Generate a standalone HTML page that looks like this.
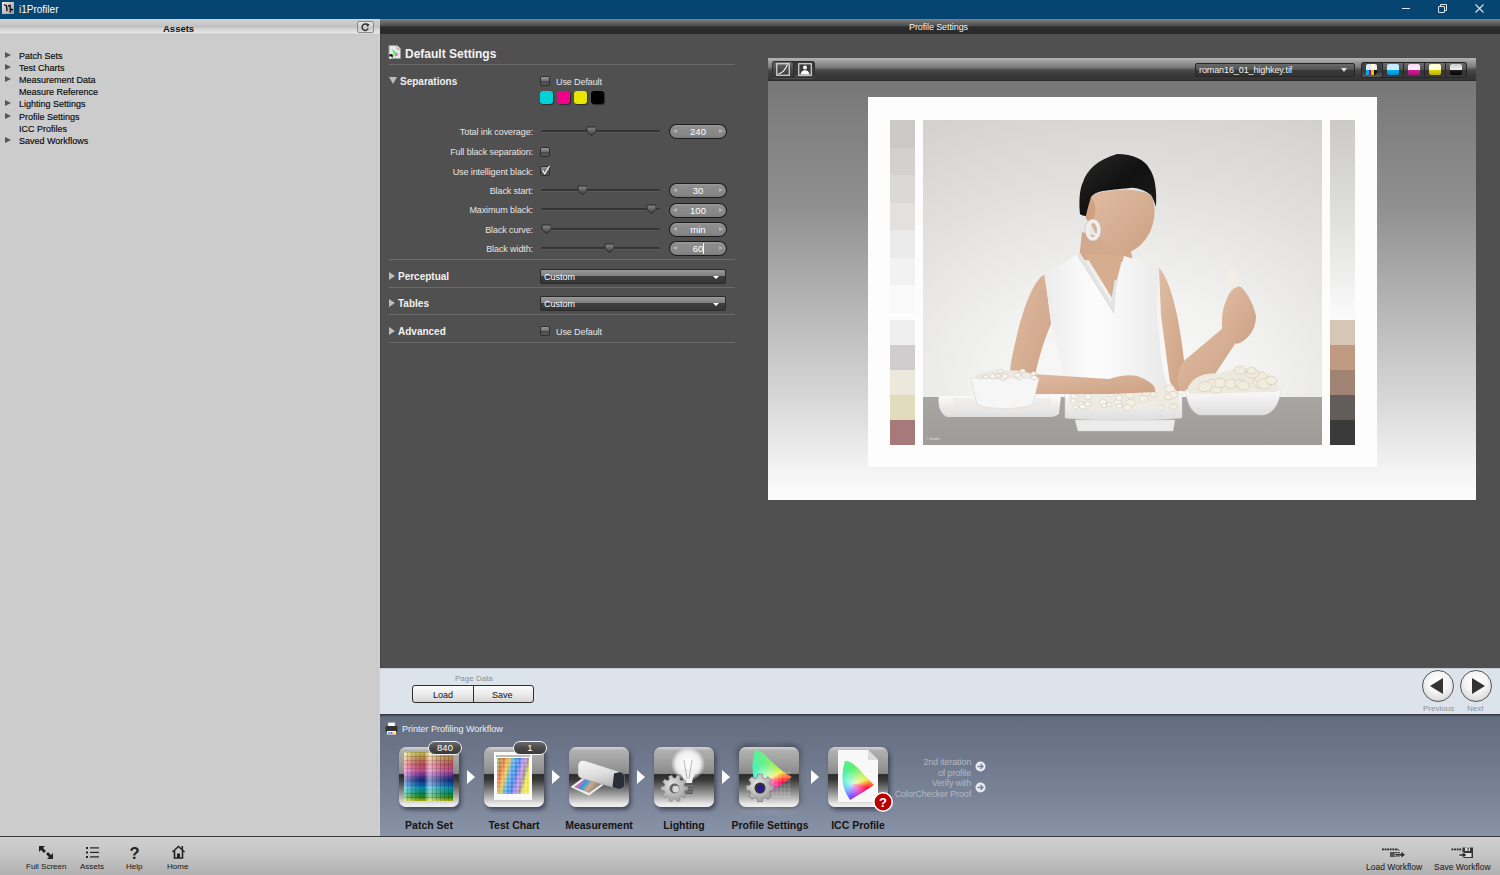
<!DOCTYPE html>
<html><head><meta charset="utf-8">
<style>
*{margin:0;padding:0;box-sizing:border-box}
html,body{width:1500px;height:875px;overflow:hidden;background:#505050;font-family:"Liberation Sans",sans-serif;}
.a{position:absolute}
.t{position:absolute;white-space:nowrap;line-height:1}
#title{left:0;top:0;width:1500px;height:19px;background:#064571;z-index:5}
#lp{left:0;top:18px;width:380px;height:818px;background:#cccccc}
#lph{left:0;top:18px;width:380px;height:17px;background:linear-gradient(#d4d4d4 0,#c9c9c9 35%,#c0c0c0 50%,#d2d2d2 62%,#e6e6e6 88%,#bdbdbd 100%)}
#ch{left:380px;top:18px;width:1120px;height:16px;background:linear-gradient(#8a8a8a 0,#707070 20%,#4a4a4a 50%,#2c2c2c 55%,#2a2a2a 100%)}
#main{left:380px;top:34px;width:1120px;height:634px;background:#505050}
.tri-r{position:absolute;width:0;height:0;border-top:3.75px solid transparent;border-bottom:3.75px solid transparent;border-left:6.5px solid #555}
.tree{font-size:9px;color:#0a0a0a;-webkit-text-stroke:0.15px #0a0a0a}
.lbl{font-size:9px;color:#e6e6e6;text-align:right;letter-spacing:-0.1px}
.cb{position:absolute;width:10px;height:10px;border:1px solid #2e2e2e;border-radius:2px;background:linear-gradient(#9a9a9a,#6a6a6a 50%,#4a4a4a 55%,#5a5a5a)}
.sep{position:absolute;left:389px;width:346px;height:1px;background:#6b6b6b}
.track{position:absolute;left:541px;width:119px;height:3px;border-radius:2px;background:linear-gradient(#2e2e2e,#3a3a3a 60%,#707070)}
.thumb{position:absolute;width:10px;height:10px}
.spin{position:absolute;left:669px;width:58px;height:15px;border-radius:8px;background:#1c1c1c;}
.spin i{position:absolute;left:1px;top:1.3px;right:1px;bottom:0.6px;border-radius:7px;background:linear-gradient(#9a9a9a,#8c8c8c 20%,#868686 80%,#7a7a7a)}
.spin b{position:absolute;left:0;right:0;top:2.5px;font-weight:400;font-size:9.5px;color:#fff;text-align:center;line-height:1}
.spin u{position:absolute;left:4px;top:5px;width:0;height:0;border-top:2.6px solid transparent;border-bottom:2.6px solid transparent;border-right:4.5px solid #b4b4b4}
.spin em{position:absolute;right:4px;top:5px;width:0;height:0;border-top:2.6px solid transparent;border-bottom:2.6px solid transparent;border-left:4.5px solid #b4b4b4}
.sw{position:absolute;top:91px;width:13px;height:13px;border-radius:3px;box-shadow:1px 1px 1px rgba(0,0,0,.45)}
.sec{font-size:10px;font-weight:700;color:#f0f0f0}
.dd{position:absolute;left:540px;width:186px;height:15px;border:1px solid #2a2a2a;border-radius:2px;background:linear-gradient(#9a9a9a,#7e7e7e 45%,#3e3e3e 50%,#363636)}
.dd b{position:absolute;left:3px;top:1.5px;font-weight:400;font-size:9px;color:#fff}
.dd s{position:absolute;right:6px;top:5.5px;width:0;height:0;border-left:3.5px solid transparent;border-right:3.5px solid transparent;border-top:3.5px solid #fff}

.wi{position:absolute;top:747px;width:60px;height:60px;border-radius:7px;overflow:hidden;background:linear-gradient(#d4d4d4 0,#b0b0b0 6%,#9a9a9a 30%,#8a8a8a 44%,#2c2c2c 46%,#3a3a3a 55%,#777 70%,#b8b8b8 85%,#e8e8e8 95%,#f0f0f0 100%);box-shadow:2px 3px 4px rgba(20,25,35,.55)}
.wl{position:absolute;top:820px;font-size:10.5px;font-weight:700;color:#141414;white-space:nowrap;line-height:1;text-align:center;width:120px}
.warr{position:absolute;top:770px;width:0;height:0;border-top:7px solid transparent;border-bottom:7px solid transparent;border-left:8px solid #fff}
.badge{position:absolute;top:741px;height:14px;border-radius:7px;border:1.5px solid #f2f2f2;background:linear-gradient(#6a6a6a,#4a4a4a 50%,#3a3a3a);color:#fff;font-size:9.5px;line-height:12px;text-align:center}
</style></head><body>
<div id="title" class="a">
  <div class="a" style="left:2px;top:2px;width:12px;height:12px;background:linear-gradient(135deg,#f0f0f0,#b8b8b8 60%,#9a9a9a)"></div>
  <svg class="a" style="left:2px;top:2px" width="12" height="12"><path d="M2 2.5 L4.5 4 L5 9 M6 4 L8 3.5 L8.5 10.5 M8.5 7 L11 8" fill="none" stroke="#111" stroke-width="1.4"/></svg>
  <div class="t" style="left:19px;top:5px;font-size:10px;color:#fff">i1Profiler</div>
  <div class="a" style="left:1402px;top:8px;width:8px;height:1px;background:#e0e6ee"></div>
  <svg class="a" style="left:1437px;top:3px" width="12" height="11"><path d="M3.5 3 V1.5 H9.5 V7.5 H8" fill="none" stroke="#e0e6ee" stroke-width="1"/><rect x="1.5" y="3.5" width="6" height="6" rx=".5" fill="none" stroke="#e0e6ee" stroke-width="1"/></svg>
  <svg class="a" style="left:1475px;top:4px" width="10" height="10"><path d="M0.5 0.5 L8.5 8.5 M8.5 0.5 L0.5 8.5" stroke="#e0e6ee" stroke-width="1.1"/></svg>
</div>
<div id="lp" class="a"></div>
<div id="lph" class="a"></div>
<div class="t" style="left:163px;top:23.5px;font-size:9.5px;font-weight:700;color:#111">Assets</div>
<div class="a" style="left:357px;top:21px;width:17px;height:12px;border:1px solid #8a8a8a;border-radius:2px;background:linear-gradient(#e4e4e4,#d0d0d0 50%,#c8c8c8 55%,#e0e0e0)"></div>
<svg class="a" style="left:360px;top:22px" width="11" height="10"><path d="M7.8 3.2 A3.2 3.2 0 1 0 8.2 6.5" fill="none" stroke="#333" stroke-width="1.5"/><path d="M6 1 L9.5 2.5 L7.5 5.2 Z" fill="#333"/></svg>
<div id="ch" class="a"></div>
<div class="t" style="left:909px;top:23px;font-size:9px;color:#f4f4f4;letter-spacing:-0.1px">Profile Settings</div>
<div id="main" class="a"></div>
<div class="a" style="left:380px;top:34px;width:1px;height:634px;background:#474747"></div>
<div class="a" style="left:378px;top:34px;width:1px;height:802px;background:#d3d3d3"></div>
<div class="a" style="left:377px;top:34px;width:1px;height:802px;background:#c8c8c8"></div>

<!-- tree -->
<div class="tri-r" style="left:5px;top:52px;border-left-color:#555"></div>
<div class="t tree" style="left:19px;top:52px">Patch Sets</div>
<div class="tri-r" style="left:5px;top:64px"></div>
<div class="t tree" style="left:19px;top:64px">Test Charts</div>
<div class="tri-r" style="left:5px;top:76px"></div>
<div class="t tree" style="left:19px;top:76px">Measurement Data</div>
<div class="t tree" style="left:19px;top:88px">Measure Reference</div>
<div class="tri-r" style="left:5px;top:100px"></div>
<div class="t tree" style="left:19px;top:100px">Lighting Settings</div>
<div class="tri-r" style="left:5px;top:113px"></div>
<div class="t tree" style="left:19px;top:113px">Profile Settings</div>
<div class="t tree" style="left:19px;top:125px">ICC Profiles</div>
<div class="tri-r" style="left:5px;top:137px"></div>
<div class="t tree" style="left:19px;top:137px">Saved Workflows</div>


<!-- settings panel -->
<svg class="a" style="left:388px;top:45px" width="13" height="14" viewBox="0 0 13 14">
 <path d="M1 0.5 H9 L12.5 4 V13.5 H1 Z" fill="#e8e8e8" stroke="#9a9a9a" stroke-width="1"/>
 <path d="M9 0.5 V4 H12.5" fill="#fff" stroke="#9a9a9a" stroke-width="1"/>
 <path d="M4 4 L10 9 L6 12 Z" fill="#5f5"/><path d="M4 4 L10 9 L7 7 Z" fill="#0ee"/><path d="M8 8 L10.5 9.5 L7 11.5 Z" fill="#f5c"/>
 <circle cx="3" cy="11" r="2" fill="#111"/><circle cx="2.5" cy="12.5" r="1.2" fill="#fff"/>
</svg>
<div class="t" style="left:405px;top:48px;font-size:12px;font-weight:700;color:#f4f4f4">Default Settings</div>
<div class="sep" style="top:64px"></div>
<div class="a" style="left:389px;top:77px;width:0;height:0;border-left:4px solid transparent;border-right:4px solid transparent;border-top:7px solid #bdbdbd"></div>
<div class="t sec" style="left:400px;top:77px">Separations</div>
<div class="cb" style="left:540px;top:76px"></div>
<div class="t lbl" style="left:556px;top:78px;text-align:left">Use Default</div>
<div class="sw" style="left:540px;background:#00d2d6"></div>
<div class="sw" style="left:557px;background:#f2008a"></div>
<div class="sw" style="left:574px;background:#e6e600"></div>
<div class="sw" style="left:591px;background:#000"></div>

<div class="t lbl" style="right:967px;top:128px">Total ink coverage:</div>
<div class="track" style="top:130px"></div>
<svg class="thumb a" style="left:586px;top:126px" width="11" height="10"><path d="M1 1 H10 V5.5 L5.5 9.5 L1 5.5 Z" fill="url(#tg)" stroke="#2a2a2a" stroke-width="1"/></svg>
<div class="spin" style="top:124px"><i></i><u></u><em></em><b>240</b></div>

<div class="t lbl" style="right:967px;top:148px">Full black separation:</div>
<div class="cb" style="left:540px;top:147px"></div>
<div class="t lbl" style="right:967px;top:168px">Use intelligent black:</div>
<div class="cb" style="left:540px;top:166px"></div>
<svg class="a" style="left:540px;top:164px" width="12" height="12"><path d="M2.5 6.5 L4.8 9.5 L9.5 2" fill="none" stroke="#f4f4f4" stroke-width="1.3"/></svg>

<div class="t lbl" style="right:967px;top:187px">Black start:</div>
<div class="track" style="top:189px"></div>
<svg class="thumb a" style="left:577px;top:185px" width="11" height="10"><path d="M1 1 H10 V5.5 L5.5 9.5 L1 5.5 Z" fill="url(#tg)" stroke="#2a2a2a" stroke-width="1"/></svg>
<div class="spin" style="top:183px"><i></i><u></u><em></em><b>30</b></div>

<div class="t lbl" style="right:967px;top:206px">Maximum black:</div>
<div class="track" style="top:208px"></div>
<svg class="thumb a" style="left:646px;top:204px" width="11" height="10"><path d="M1 1 H10 V5.5 L5.5 9.5 L1 5.5 Z" fill="url(#tg)" stroke="#2a2a2a" stroke-width="1"/></svg>
<div class="spin" style="top:203px"><i></i><u></u><em></em><b>100</b></div>

<div class="t lbl" style="right:967px;top:226px">Black curve:</div>
<div class="track" style="top:228px"></div>
<svg class="thumb a" style="left:541px;top:224px" width="11" height="10"><path d="M1 1 H10 V5.5 L5.5 9.5 L1 5.5 Z" fill="url(#tg)" stroke="#2a2a2a" stroke-width="1"/></svg>
<div class="spin" style="top:222px"><i></i><u></u><em></em><b>min</b></div>

<div class="t lbl" style="right:967px;top:245px">Black width:</div>
<div class="track" style="top:247px"></div>
<svg class="thumb a" style="left:604px;top:243px" width="11" height="10"><path d="M1 1 H10 V5.5 L5.5 9.5 L1 5.5 Z" fill="url(#tg)" stroke="#2a2a2a" stroke-width="1"/></svg>
<div class="spin" style="top:241px"><i></i><u></u><em></em><b>60</b></div>
<div class="a" style="left:703px;top:243px;width:1px;height:11px;background:#fff"></div>

<div class="sep" style="top:259px"></div>
<div class="tri-r" style="left:389px;top:272px;border-left-color:#bdbdbd;border-top-width:4px;border-bottom-width:4px;border-left-width:6px"></div>
<div class="t sec" style="left:398px;top:272px">Perceptual</div>
<div class="dd" style="top:269px"><b>Custom</b><s></s></div>
<div class="sep" style="top:287px"></div>
<div class="tri-r" style="left:389px;top:299px;border-left-color:#bdbdbd;border-top-width:4px;border-bottom-width:4px;border-left-width:6px"></div>
<div class="t sec" style="left:398px;top:299px">Tables</div>
<div class="dd" style="top:296px"><b>Custom</b><s></s></div>
<div class="sep" style="top:314px"></div>
<div class="tri-r" style="left:389px;top:327px;border-left-color:#bdbdbd;border-top-width:4px;border-bottom-width:4px;border-left-width:6px"></div>
<div class="t sec" style="left:398px;top:327px">Advanced</div>
<div class="cb" style="left:540px;top:326px"></div>
<div class="t lbl" style="left:556px;top:328px;text-align:left">Use Default</div>
<div class="sep" style="top:342px"></div>
<svg width="0" height="0" style="position:absolute"><defs><linearGradient id="tg" x1="0" y1="0" x2="0" y2="1"><stop offset="0" stop-color="#8a8a8a"/><stop offset="1" stop-color="#3a3a3a"/></linearGradient></defs></svg>

<!-- preview panel -->
<div class="a" style="left:768px;top:58px;width:708px;height:23px;background:linear-gradient(#b4b4b4 0,#9e9e9e 15%,#7a7a7a 40%,#4a4a4a 52%,#3c3c3c 70%,#343434 95%,#222 100%)"></div>
<div class="a" style="left:768px;top:81px;width:708px;height:419px;background:linear-gradient(#777777 0,#7e7e7e 8%,#909090 30%,#bcbcbc 58%,#dedede 80%,#f4f4f4 93%,#fdfdfd 100%)"></div>
<!-- toolbar left buttons -->
<div class="a" style="left:772px;top:61px;width:43px;height:17px;border-radius:3px;background:#2e2e2e;box-shadow:0 1px 0 rgba(255,255,255,.15)"></div>
<div class="a" style="left:773px;top:62px;width:20px;height:15px;border-radius:2px;background:linear-gradient(#6a6a6a,#4a4a4a 50%,#383838)"></div>
<div class="a" style="left:794px;top:62px;width:20px;height:15px;border-radius:2px;background:linear-gradient(#3a3a3a,#3a3a3a 85%,#555)"></div>
<svg class="a" style="left:776px;top:63px" width="14" height="13"><rect x="0.75" y="0.75" width="12.5" height="11.5" fill="none" stroke="#ddd" stroke-width="1.2"/><path d="M2 11 Q8 10 11.5 1.5" fill="none" stroke="#eee" stroke-width="1.1"/></svg>
<svg class="a" style="left:798px;top:63px" width="14" height="13"><rect x="0.75" y="0.75" width="12.5" height="11.5" fill="#3a3a3a" stroke="#ddd" stroke-width="1.2"/><circle cx="7" cy="4.5" r="2" fill="#fff"/><path d="M2.5 11.5 Q3 7.5 7 7.3 Q11 7.5 11.5 11.5 Z" fill="#fff"/></svg>
<!-- file dropdown -->
<div class="a" style="left:1195px;top:63px;width:160px;height:14px;border:1px solid #262626;border-radius:2px;background:linear-gradient(#6a6a6a,#555 45%,#3a3a3a 52%,#333)"></div>
<div class="t" style="left:1199px;top:65.5px;font-size:9px;color:#f0f0f0;letter-spacing:-0.1px">roman16_01_highkey.tif</div>
<div class="a" style="left:1341px;top:68px;width:0;height:0;border-left:3.5px solid transparent;border-right:3.5px solid transparent;border-top:4px solid #ddd"></div>
<!-- channel buttons -->
<div class="a" style="left:1361px;top:62px;width:106px;height:16px;border-radius:3px;background:#262626"></div>
<div class="a" style="left:1362px;top:63px;width:20px;height:14px;border-radius:2px;background:linear-gradient(#484848,#3a3a3a 60%,#5a5a5a)"></div>
<div class="a" style="left:1383px;top:63px;width:20px;height:14px;background:linear-gradient(#6a6a6a,#555 45%,#333 55%,#3a3a3a)"></div>
<div class="a" style="left:1404px;top:63px;width:20px;height:14px;background:linear-gradient(#6a6a6a,#555 45%,#333 55%,#3a3a3a)"></div>
<div class="a" style="left:1425px;top:63px;width:20px;height:14px;background:linear-gradient(#6a6a6a,#555 45%,#333 55%,#3a3a3a)"></div>
<div class="a" style="left:1446px;top:63px;width:20px;height:14px;border-radius:0 2px 2px 0;background:linear-gradient(#6a6a6a,#555 45%,#333 55%,#3a3a3a)"></div>
<div class="a" style="left:1366px;top:64px;width:11px;height:11px;border-radius:2px;overflow:hidden;background:linear-gradient(90deg,#cfefff 0,#cfefff 25%,#ffd0f0 25%,#ffd0f0 50%,#ffffc8 50%,#ffffc8 75%,#eee 75%)">
  <div class="a" style="left:0;top:6px;width:11px;height:5px;background:linear-gradient(90deg,#00a8e8 0,#00a8e8 25%,#c0007a 25%,#c0007a 50%,#d8d000 50%,#d8d000 75%,#111 75%)"></div></div>
<div class="a" style="left:1387px;top:64px;width:12px;height:11px;border-radius:2px;background:linear-gradient(#c8ecff 0,#c8ecff 50%,#00b0f0 55%,#0090d0)"></div>
<div class="a" style="left:1408px;top:64px;width:12px;height:11px;border-radius:2px;background:linear-gradient(#ffd8f8 0,#ffeefc 50%,#d02090 55%,#b01080)"></div>
<div class="a" style="left:1429px;top:64px;width:12px;height:11px;border-radius:2px;background:linear-gradient(#ffffd0 0,#ffffe0 50%,#e0d800 55%,#b8b000)"></div>
<div class="a" style="left:1450px;top:64px;width:12px;height:11px;border-radius:2px;background:linear-gradient(#ccc 0,#eee 50%,#222 55%,#000)"></div>
<!-- paper -->
<div class="a" style="left:868px;top:97px;width:509px;height:370px;background:#fdfdfd"></div>
<div class="a" style="left:890px;top:120px;width:25px;height:193px;background:linear-gradient(#cbc9c6 0,#cbc9c6 14.3%,#d3d1cf 14.3%,#d3d1cf 28.6%,#dbd9d7 28.6%,#dbd9d7 42.9%,#e2e1e0 42.9%,#e2e1e0 57.1%,#eaeaea 57.1%,#eaeaea 71.4%,#f2f2f2 71.4%,#f2f2f2 85.7%,#f9f9f9 85.7%)"></div>
<div class="a" style="left:890px;top:320px;width:25px;height:125px;background:linear-gradient(#efeff0 0,#efeff0 20%,#cfcdcd 20%,#cfcdcd 40%,#ede8dc 40%,#ede8dc 60%,#e1dcbe 60%,#e1dcbe 80%,#a67a7a 80%)"></div>
<div class="a" style="left:1330px;top:120px;width:25px;height:200px;background:linear-gradient(#cbcac8,#e0e0df 50%,#fbfbfb)"></div>
<div class="a" style="left:1330px;top:320px;width:25px;height:125px;background:linear-gradient(#d6c6b5 0,#d6c6b5 20%,#c09a80 20%,#c09a80 40%,#a08373 40%,#a08373 60%,#625d5b 60%,#625d5b 80%,#3a3a3a 80%)"></div>
<div class="a" style="left:923px;top:120px;width:399px;height:325px;overflow:hidden;background:radial-gradient(ellipse 460px 330px at 50% 82%,#fbfbfb 0,#f2f2f1 30%,#e0dfdd 65%,#cfcdca 100%)">
 <div class="a" style="left:0;top:277px;width:399px;height:48px;background:linear-gradient(#a8a6a3,#9e9c99)"></div>
  <svg class="a" style="left:0;top:0" width="399" height="325" viewBox="0 0 399 325">
  <defs>
   <linearGradient id="skin" x1="0" y1="0" x2="1" y2="1"><stop offset="0" stop-color="#dfbca2"/><stop offset="1" stop-color="#cda184"/></linearGradient>
   <linearGradient id="shirt" x1="0" y1="0" x2="1" y2="0"><stop offset="0" stop-color="#ececec"/><stop offset=".4" stop-color="#fdfdfd"/><stop offset="1" stop-color="#e8e8e8"/></linearGradient>
   <linearGradient id="plate" x1="0" y1="0" x2="0" y2="1"><stop offset="0" stop-color="#fafafa"/><stop offset="1" stop-color="#dedede"/></linearGradient>
   <linearGradient id="hairg" x1="0" y1="0" x2="1" y2="1"><stop offset="0" stop-color="#2a2a2a"/><stop offset=".5" stop-color="#111"/><stop offset="1" stop-color="#1e1e1e"/></linearGradient>
  </defs>
  <!-- neck -->
  <path d="M159 112 L207 126 L210 142 L156 140 Z" fill="#d2a98c"/>
  <!-- upper arms -->
  <path d="M122 154 C110 160 100 190 94 215 C88 240 84 258 90 270 L112 256 C116 236 122 218 128 204 Z" fill="url(#skin)"/>
  <path d="M236 148 C248 160 256 200 260 232 C262 250 264 262 263 268 L254 272 L247 262 C244 240 240 210 238 195 Z" fill="url(#skin)"/>
  <!-- shirt -->
  <path d="M121 154 C132 148 146 140 154 134 L188 188 L201 136 C214 140 226 143 236 146 C234 165 234 180 234 195 C236 215 238 238 240 250 C243 262 246 270 248 278 L142 278 C142 262 138 245 136 234 C132 215 128 200 127 195 C125 180 123 165 121 154 Z" fill="url(#shirt)"/>
  <path d="M156 136 L190 190 L192 160" fill="none" stroke="#dcdcdc" stroke-width="2.5"/>
  <path d="M162 134 L200 136 L189 178 Z" fill="#d6ad8e"/>
  <path d="M156 134 L189 186 L193 160" fill="none" stroke="#e4e4e4" stroke-width="3"/>
  <!-- right forearm and hand -->
  <path d="M258 271 C270 273 282 265 292 254 L316 218 L300 208 L262 240 C254 248 252 264 258 271 Z" fill="url(#skin)"/>
  <path d="M300 214 C297 200 300 186 305 176 C309 168 315 164 319 168 C325 174 331 186 333 196 C333 210 325 220 314 224 Z" fill="url(#skin)"/>
  <path d="M304 165 C302 156 306 149 310 150 C315 152 316 160 313 168 Z" fill="#f2eee6"/>
  <!-- face -->
  <path d="M166 76 C180 70 212 66 228 75 C233 85 233 100 226 114 C220 124 213 130 206 132 C196 132 186 126 180 122 C172 114 166 104 166 92 Z" fill="url(#skin)"/>
  <ellipse cx="167" cy="90" rx="5.5" ry="12" fill="#d0a282"/>
  <!-- hair -->
  <path d="M157 94 C156 84 156 70 160 62 C164 50 174 40 194 34 C210 34 222 40 226 48 C232 56 234 70 233 87 C231 80 229 77 228 75 C222 70 212 67 207 68 C195 69 186 70 180 71 C174 72 170 74 168 77 C166 84 164 90 163 96 C161 96 158 95 157 94 Z" fill="url(#hairg)"/>
  <!-- earring -->
  <ellipse cx="170" cy="110" rx="6" ry="9" fill="none" stroke="#efefef" stroke-width="4"/>
  <ellipse cx="170" cy="110" rx="8" ry="11" fill="none" stroke="#aaa" stroke-width=".6" opacity=".7"/>
  <!-- plates -->
  <path d="M16 276 L138 276 L136 294 C132 297 128 297 124 297 L24 297 C18 295 14 285 16 276 Z" fill="url(#plate)"/>
  <path d="M30 278 L128 278 L126 292 L32 292 Z" fill="#ece6e2" opacity=".5"/>
  <path d="M152 300 L252 300 L250 311 L155 311 Z" fill="#ececec" stroke="#d0d0d0" stroke-width=".5"/>
  <path d="M142 274 L259 274 L259 298 C230 301 170 301 142 298 Z" fill="url(#plate)" stroke="#d4d4d4" stroke-width=".5"/>
  <path d="M146 276 C152 268 170 262 188 264 C210 262 240 262 256 272 L256 288 L146 290 Z" fill="#efebe2"/>

<g><ellipse cx="179.9" cy="282.3" rx="3.7" ry="2.8" fill="#f8f6f0" stroke="#c4c0b6" stroke-width=".5"/><ellipse cx="195.2" cy="282.3" rx="3.9" ry="2.9" fill="#f8f6f0" stroke="#c4c0b6" stroke-width=".5"/><ellipse cx="151.4" cy="276.2" rx="3.9" ry="2.9" fill="#f8f6f0" stroke="#c4c0b6" stroke-width=".5"/><ellipse cx="181.2" cy="285.8" rx="2.7" ry="2.0" fill="#f8f6f0" stroke="#c4c0b6" stroke-width=".5"/><ellipse cx="172.5" cy="271.4" rx="3.3" ry="2.5" fill="#f8f6f0" stroke="#c4c0b6" stroke-width=".5"/><ellipse cx="177.5" cy="266.3" rx="2.8" ry="2.1" fill="#f8f6f0" stroke="#c4c0b6" stroke-width=".5"/><ellipse cx="163.4" cy="286.2" rx="3.6" ry="2.7" fill="#f8f6f0" stroke="#c4c0b6" stroke-width=".5"/><ellipse cx="157.7" cy="283.5" rx="2.7" ry="2.0" fill="#f8f6f0" stroke="#c4c0b6" stroke-width=".5"/><ellipse cx="179.6" cy="268.8" rx="2.5" ry="1.9" fill="#f8f6f0" stroke="#c4c0b6" stroke-width=".5"/><ellipse cx="191.8" cy="270.6" rx="2.8" ry="2.1" fill="#f8f6f0" stroke="#c4c0b6" stroke-width=".5"/><ellipse cx="197.2" cy="285.2" rx="2.9" ry="2.2" fill="#f8f6f0" stroke="#c4c0b6" stroke-width=".5"/><ellipse cx="196.2" cy="277.9" rx="3.5" ry="2.6" fill="#f8f6f0" stroke="#c4c0b6" stroke-width=".5"/><ellipse cx="159.8" cy="286.7" rx="3.5" ry="2.7" fill="#f8f6f0" stroke="#c4c0b6" stroke-width=".5"/><ellipse cx="196.4" cy="285.7" rx="2.9" ry="2.2" fill="#f8f6f0" stroke="#c4c0b6" stroke-width=".5"/><ellipse cx="167.3" cy="269.7" rx="2.7" ry="2.0" fill="#f8f6f0" stroke="#c4c0b6" stroke-width=".5"/><ellipse cx="153.1" cy="272.6" rx="3.4" ry="2.6" fill="#f8f6f0" stroke="#c4c0b6" stroke-width=".5"/><ellipse cx="150.2" cy="280.9" rx="3.0" ry="2.3" fill="#f8f6f0" stroke="#c4c0b6" stroke-width=".5"/><ellipse cx="164.9" cy="284.0" rx="3.2" ry="2.4" fill="#f8f6f0" stroke="#c4c0b6" stroke-width=".5"/><ellipse cx="165.2" cy="276.6" rx="3.6" ry="2.7" fill="#f8f6f0" stroke="#c4c0b6" stroke-width=".5"/><ellipse cx="152.7" cy="287.5" rx="2.5" ry="1.9" fill="#f8f6f0" stroke="#c4c0b6" stroke-width=".5"/><ellipse cx="186.0" cy="284.6" rx="2.5" ry="1.9" fill="#f8f6f0" stroke="#c4c0b6" stroke-width=".5"/><ellipse cx="187.8" cy="274.1" rx="3.4" ry="2.5" fill="#f8f6f0" stroke="#c4c0b6" stroke-width=".5"/><ellipse cx="150.4" cy="267.0" rx="2.8" ry="2.1" fill="#f8f6f0" stroke="#c4c0b6" stroke-width=".5"/><ellipse cx="195.8" cy="270.3" rx="3.6" ry="2.7" fill="#f8f6f0" stroke="#c4c0b6" stroke-width=".5"/><ellipse cx="250.3" cy="286.8" rx="3.7" ry="2.8" fill="#f4f0e4" stroke="#ccc4b0" stroke-width=".5"/><ellipse cx="220.4" cy="278.5" rx="4.6" ry="3.4" fill="#f4f0e4" stroke="#ccc4b0" stroke-width=".5"/><ellipse cx="207.6" cy="283.0" rx="4.6" ry="3.4" fill="#f4f0e4" stroke="#ccc4b0" stroke-width=".5"/><ellipse cx="246.7" cy="268.7" rx="4.9" ry="3.7" fill="#f4f0e4" stroke="#ccc4b0" stroke-width=".5"/><ellipse cx="206.7" cy="274.8" rx="4.2" ry="3.2" fill="#f4f0e4" stroke="#ccc4b0" stroke-width=".5"/><ellipse cx="249.7" cy="274.8" rx="4.8" ry="3.6" fill="#f4f0e4" stroke="#ccc4b0" stroke-width=".5"/><ellipse cx="230.3" cy="274.2" rx="3.6" ry="2.7" fill="#f4f0e4" stroke="#ccc4b0" stroke-width=".5"/><ellipse cx="211.2" cy="269.6" rx="3.3" ry="2.5" fill="#f4f0e4" stroke="#ccc4b0" stroke-width=".5"/><ellipse cx="237.8" cy="287.9" rx="3.3" ry="2.5" fill="#f4f0e4" stroke="#ccc4b0" stroke-width=".5"/><ellipse cx="204.5" cy="287.7" rx="4.1" ry="3.1" fill="#f4f0e4" stroke="#ccc4b0" stroke-width=".5"/><ellipse cx="223.1" cy="272.7" rx="4.2" ry="3.1" fill="#f4f0e4" stroke="#ccc4b0" stroke-width=".5"/><ellipse cx="245.0" cy="277.1" rx="3.8" ry="2.9" fill="#f4f0e4" stroke="#ccc4b0" stroke-width=".5"/></g>
  <!-- left forearm -->
  <path d="M90 270 C88 262 94 256 110 254 L186 259 C196 256 206 254 214 256 C226 260 234 266 232 272 L188 274 L92 274 Z" fill="url(#skin)"/>
  <path d="M48 258 L116 258 L110 284 C100 290 62 290 54 284 Z" fill="#f6f6f6" stroke="#d8d8d8" stroke-width=".6"/>
  <path d="M50 259 C56 250 70 250 80 251 C95 249 110 252 114 258 Z" fill="#eeeae2"/>
  <path d="M262 270 L358 270 C356 284 350 294 340 295 L276 295 C268 292 264 282 262 270 Z" fill="url(#plate)" stroke="#d4d4d4" stroke-width=".5"/>
  <path d="M264 270 C268 258 280 252 296 254 C310 246 335 246 350 258 C356 262 356 268 354 272 L266 274 Z" fill="#eee9de"/>
 <g><ellipse cx="57.2" cy="257.3" rx="2.0" ry="1.5" fill="#f8f6f0" stroke="#c0bcb2" stroke-width=".5"/><ellipse cx="82.6" cy="256.7" rx="2.2" ry="1.6" fill="#f8f6f0" stroke="#c0bcb2" stroke-width=".5"/><ellipse cx="96.4" cy="257.6" rx="2.9" ry="2.2" fill="#f8f6f0" stroke="#c0bcb2" stroke-width=".5"/><ellipse cx="99.7" cy="250.9" rx="2.7" ry="2.0" fill="#f8f6f0" stroke="#c0bcb2" stroke-width=".5"/><ellipse cx="62.7" cy="256.8" rx="2.4" ry="1.8" fill="#f8f6f0" stroke="#c0bcb2" stroke-width=".5"/><ellipse cx="80.3" cy="258.0" rx="3.3" ry="2.5" fill="#f8f6f0" stroke="#c0bcb2" stroke-width=".5"/><ellipse cx="110.6" cy="253.6" rx="2.7" ry="2.0" fill="#f8f6f0" stroke="#c0bcb2" stroke-width=".5"/><ellipse cx="96.3" cy="253.8" rx="2.4" ry="1.8" fill="#f8f6f0" stroke="#c0bcb2" stroke-width=".5"/><ellipse cx="77.4" cy="251.2" rx="2.6" ry="1.9" fill="#f8f6f0" stroke="#c0bcb2" stroke-width=".5"/><ellipse cx="111.3" cy="257.7" rx="2.9" ry="2.2" fill="#f8f6f0" stroke="#c0bcb2" stroke-width=".5"/><ellipse cx="83.0" cy="252.7" rx="2.1" ry="1.6" fill="#f8f6f0" stroke="#c0bcb2" stroke-width=".5"/><ellipse cx="69.8" cy="256.3" rx="3.3" ry="2.5" fill="#f8f6f0" stroke="#c0bcb2" stroke-width=".5"/><ellipse cx="75.0" cy="256.3" rx="3.2" ry="2.4" fill="#f8f6f0" stroke="#c0bcb2" stroke-width=".5"/><ellipse cx="94.3" cy="255.3" rx="3.1" ry="2.4" fill="#f8f6f0" stroke="#c0bcb2" stroke-width=".5"/><ellipse cx="75.1" cy="255.6" rx="2.4" ry="1.8" fill="#f8f6f0" stroke="#c0bcb2" stroke-width=".5"/><ellipse cx="82.2" cy="256.2" rx="3.0" ry="2.3" fill="#f8f6f0" stroke="#c0bcb2" stroke-width=".5"/><ellipse cx="292.7" cy="268.9" rx="5.9" ry="4.5" fill="#f2ecdf" stroke="#c8bea8" stroke-width=".5"/><ellipse cx="316.8" cy="250.2" rx="5.6" ry="4.2" fill="#f2ecdf" stroke="#c8bea8" stroke-width=".5"/><ellipse cx="289.1" cy="263.4" rx="5.4" ry="4.0" fill="#f2ecdf" stroke="#c8bea8" stroke-width=".5"/><ellipse cx="336.6" cy="262.9" rx="6.4" ry="4.8" fill="#f2ecdf" stroke="#c8bea8" stroke-width=".5"/><ellipse cx="297.2" cy="262.9" rx="6.2" ry="4.7" fill="#f2ecdf" stroke="#c8bea8" stroke-width=".5"/><ellipse cx="337.6" cy="257.0" rx="6.5" ry="4.9" fill="#f2ecdf" stroke="#c8bea8" stroke-width=".5"/><ellipse cx="341.1" cy="263.8" rx="6.9" ry="5.2" fill="#f2ecdf" stroke="#c8bea8" stroke-width=".5"/><ellipse cx="348.3" cy="260.4" rx="5.6" ry="4.2" fill="#f2ecdf" stroke="#c8bea8" stroke-width=".5"/><ellipse cx="282.0" cy="266.7" rx="6.8" ry="5.1" fill="#f2ecdf" stroke="#c8bea8" stroke-width=".5"/><ellipse cx="308.1" cy="263.8" rx="6.2" ry="4.6" fill="#f2ecdf" stroke="#c8bea8" stroke-width=".5"/><ellipse cx="329.3" cy="253.4" rx="6.3" ry="4.8" fill="#f2ecdf" stroke="#c8bea8" stroke-width=".5"/><ellipse cx="316.8" cy="263.3" rx="5.3" ry="3.9" fill="#f2ecdf" stroke="#c8bea8" stroke-width=".5"/><ellipse cx="320.4" cy="265.5" rx="5.9" ry="4.4" fill="#f2ecdf" stroke="#c8bea8" stroke-width=".5"/><ellipse cx="328.5" cy="250.6" rx="4.5" ry="3.4" fill="#f2ecdf" stroke="#c8bea8" stroke-width=".5"/></g>
</svg>
 <div class="t" style="left:3px;top:317px;font-size:4px;color:#ddd">© bvdm</div>
</div>

<!-- page data bar -->
<div class="a" style="left:380px;top:668px;width:1120px;height:46px;background:#dde3ea;border-top:1px solid #c8ced6"></div>
<div class="t" style="left:455px;top:675px;font-size:8px;color:#8c919a">Page Data</div>
<div class="a" style="left:412px;top:685px;width:122px;height:18px;border:1px solid #2e2e2e;border-radius:3px;background:linear-gradient(#fafafa,#ececec 50%,#d6d6d6)"></div>
<div class="a" style="left:473px;top:686px;width:1px;height:16px;background:#2e2e2e"></div>
<div class="t" style="left:433px;top:691px;font-size:9px;color:#111">Load</div>
<div class="t" style="left:492px;top:691px;font-size:9px;color:#111">Save</div>
<!-- prev next -->
<div class="a" style="left:1422px;top:670px;width:32px;height:32px;border-radius:50%;border:1px solid #555;background:radial-gradient(circle at 50% 35%,#fff 0,#f4f4f4 45%,#c8c8c8 100%)"></div>
<div class="a" style="left:1430px;top:678px;width:0;height:0;border-top:8px solid transparent;border-bottom:8px solid transparent;border-right:13px solid #333"></div>
<div class="a" style="left:1460px;top:670px;width:32px;height:32px;border-radius:50%;border:1px solid #555;background:radial-gradient(circle at 50% 35%,#fff 0,#f4f4f4 45%,#c8c8c8 100%)"></div>
<div class="a" style="left:1472px;top:678px;width:0;height:0;border-top:8px solid transparent;border-bottom:8px solid transparent;border-left:13px solid #333"></div>
<div class="t" style="left:1423px;top:705px;font-size:8px;color:#8c919a">Previous</div>
<div class="t" style="left:1467px;top:705px;font-size:8px;color:#8c919a">Next</div>
<!-- workflow -->
<div class="a" style="left:380px;top:714px;width:1120px;height:122px;background:linear-gradient(#646c7f 0,#6c7589 30%,#7b8599 70%,#8a94a8 100%)"></div>
<div class="a" style="left:380px;top:714px;width:1120px;height:3px;background:linear-gradient(#2e3138,rgba(60,64,72,0))"></div>
<svg class="a" style="left:385px;top:722px" width="13" height="13"><rect x="3" y="0.5" width="7" height="4" fill="#fff" stroke="#999" stroke-width=".6"/><rect x="0.5" y="4" width="12" height="6" rx="1" fill="#333"/><rect x="2" y="9" width="9" height="3.5" fill="#fff"/><rect x="3" y="10" width="2" height="2" fill="#2cf"/><rect x="5.5" y="10" width="2" height="2" fill="#f3c"/><rect x="8" y="10" width="2" height="2" fill="#ee0"/></svg>
<div class="t" style="left:402px;top:725px;font-size:9px;color:#eef1f6">Printer Profiling Workflow</div>

<!-- workflow icons -->
<div class="wi" style="left:399px">
 <svg class="a" style="left:0;top:0" width="60" height="60">
  <defs>
   <pattern id="dots" x="0" y="0" width="4" height="4" patternUnits="userSpaceOnUse"><rect x="0.3" y="0.3" width="3.2" height="3.2" rx="1.2" fill="#fff" fill-opacity=".35"/></pattern>
   <linearGradient id="psg" x1="0" y1="0" x2="0" y2="1">
    <stop offset="0" stop-color="#ffff60"/><stop offset=".12" stop-color="#ffb060"/><stop offset=".25" stop-color="#ff6070"/><stop offset=".38" stop-color="#ff60c0"/>
    <stop offset=".47" stop-color="#9040d0"/><stop offset=".56" stop-color="#1830a0"/><stop offset=".66" stop-color="#0070e0"/><stop offset=".75" stop-color="#00c8e0"/><stop offset=".84" stop-color="#00b070"/><stop offset=".92" stop-color="#30b020"/><stop offset="1" stop-color="#f0f000"/>
   </linearGradient>
   <linearGradient id="psh" x1="0" y1="0" x2="1" y2="0"><stop offset="0" stop-color="#fff" stop-opacity=".55"/><stop offset=".4" stop-color="#000" stop-opacity=".25"/><stop offset=".5" stop-color="#fff" stop-opacity=".55"/><stop offset="1" stop-color="#000" stop-opacity=".25"/></linearGradient>
   <pattern id="grid" x="5" y="5" width="4.1" height="4.1" patternUnits="userSpaceOnUse"><path d="M0 0 H4.1 V4.1" fill="none" stroke="#000" stroke-opacity=".35" stroke-width="1"/></pattern>
  </defs>
  <rect x="5" y="5" width="49" height="49" fill="url(#psg)"/>
  <rect x="5" y="5" width="49" height="49" fill="url(#psh)"/>
  <rect x="5" y="5" width="49" height="49" fill="url(#grid)"/>
 </svg>
</div>
<div class="badge" style="left:428px;width:34px">840</div>
<div class="warr" style="left:467px"></div>
<div class="wl" style="left:369px">Patch Set</div>

<div class="wi" style="left:484px">
 <svg class="a" style="left:0;top:0" width="60" height="60">
  <defs><linearGradient id="tcg" x1="0" y1="0" x2="1" y2="0.3">
   <stop offset="0" stop-color="#60c040"/><stop offset=".2" stop-color="#e06030"/><stop offset=".35" stop-color="#e0c040"/><stop offset=".5" stop-color="#40a0e0"/><stop offset=".65" stop-color="#3070e0"/><stop offset=".8" stop-color="#c080e0"/><stop offset=".9" stop-color="#888"/><stop offset="1" stop-color="#f0e040"/></linearGradient></defs>
  <rect x="10" y="5" width="38" height="48" fill="#fafafa"/>
  <rect x="12" y="8" width="34" height="2" fill="#bbb"/>
  <rect x="13" y="11" width="32" height="36" fill="url(#tcg)"/>
  <rect x="13" y="11" width="32" height="36" fill="url(#dots)"/>
 </svg>
</div>
<div class="badge" style="left:513px;width:34px">1</div>
<div class="warr" style="left:552px"></div>
<div class="wl" style="left:454px">Test Chart</div>

<div class="wi" style="left:569px">
 <svg class="a" style="left:0;top:0" width="60" height="60">
  <defs><linearGradient id="prb" x1="0" y1="0" x2="0.3" y2="1"><stop offset="0" stop-color="#f6f6f6"/><stop offset=".6" stop-color="#dcdcdc"/><stop offset="1" stop-color="#b8b8b8"/></linearGradient>
  <linearGradient id="prp" x1="0" y1="0" x2="1" y2="0.4"><stop offset="0" stop-color="#5ce"/><stop offset=".25" stop-color="#e6a"/><stop offset=".45" stop-color="#39d"/><stop offset=".65" stop-color="#ca8"/><stop offset="1" stop-color="#777"/></linearGradient></defs>
  <path d="M1.5 40 L20 48.5 L37 36 L17 28.5 Z" fill="#f2f2f2"/>
  <path d="M5 40 L20 46 L34 36 L17 31 Z" fill="url(#prp)"/>
  <path d="M14 13.5 C10.5 13.5 9 16 9 19 L9 27 C9 29 10.5 30.5 13 31.5 L48 41.5 C52 42.5 55.5 40.5 55.5 37 L55.5 30 C55.5 27.5 53.5 26 51 25 L17 14 Z" fill="url(#prb)" stroke="#9a9a9a" stroke-width=".5"/>
  <path d="M45 26.5 L51 25 C53.5 26 55.5 27.5 55.5 30 L55.5 37 C55.5 40.5 52 42.5 48 41.5 L43.5 40 Z" fill="#2a2e38"/>
 </svg>
</div>
<div class="warr" style="left:637px"></div>
<div class="wl" style="left:539px">Measurement</div>

<div class="wi" style="left:654px">
 <svg class="a" style="left:0;top:0" width="60" height="60">
  <defs><radialGradient id="bulb" cx=".5" cy=".5" r=".5"><stop offset="0" stop-color="#fff"/><stop offset=".65" stop-color="#f2f2f2"/><stop offset=".8" stop-color="#fff" stop-opacity=".6"/><stop offset="1" stop-color="#fff" stop-opacity="0"/></radialGradient>
  <radialGradient id="gear" cx=".4" cy=".35" r=".7"><stop offset="0" stop-color="#e4e4e4"/><stop offset="1" stop-color="#9a9a9a"/></radialGradient></defs>
  <circle cx="34" cy="17" r="17" fill="url(#bulb)"/>
  <path d="M25 22 C27 28 30 30 30.5 36 L38 36 C38.5 30 41 28 43 22 Z" fill="#f0f0f0"/>
  <path d="M30 13 L33 32 M38 13 L35 32" stroke="#a8a8a8" stroke-width=".8" fill="none"/>
  <rect x="31" y="36" width="8" height="11" rx="1.5" fill="#5a5a5a"/>
  <path d="M31 39 H39 M31 42 H39 M31 45 H39" stroke="#999" stroke-width=".7"/>
  <g transform="translate(20.5,41.5)"><path d="M10.28 -2.13 L13.39 -1.69 L13.39 1.69 L10.28 2.13 L9.57 4.32 L11.83 6.50 L9.84 9.24 L7.07 7.77 L5.20 9.12 L5.75 12.22 L2.53 13.26 L1.15 10.44 L-1.15 10.44 L-2.53 13.26 L-5.75 12.22 L-5.20 9.12 L-7.07 7.77 L-9.84 9.24 L-11.83 6.50 L-9.57 4.32 L-10.28 2.13 L-13.39 1.69 L-13.39 -1.69 L-10.28 -2.13 L-9.57 -4.32 L-11.83 -6.50 L-9.84 -9.24 L-7.07 -7.77 L-5.20 -9.12 L-5.75 -12.22 L-2.53 -13.26 L-1.15 -10.44 L1.15 -10.44 L2.53 -13.26 L5.75 -12.22 L5.20 -9.12 L7.07 -7.77 L9.84 -9.24 L11.83 -6.50 L9.57 -4.32 Z" fill="url(#gear)" stroke="#888" stroke-width=".5"/>
   <circle r="5" fill="#666"/><circle r="3.4" cx="1.2" cy=".6" fill="#d8d8d8"/></g>
 </svg>
</div>
<div class="warr" style="left:722px"></div>
<div class="wl" style="left:624px">Lighting</div>

<div class="a" style="left:733px;top:741px;width:72px;height:72px;border-radius:12px;background:radial-gradient(rgba(200,210,230,.45) 40%,rgba(200,210,230,0) 70%)"></div>
<div class="wi" style="left:739px;box-shadow:0 0 5px 2px rgba(35,40,50,.55),0 4px 6px rgba(220,225,235,.4)">
 <div class="a" style="left:0;top:0;width:60px;height:60px;background:radial-gradient(circle at 45% 55%,rgba(255,255,255,.7) 0,rgba(255,255,255,0) 35%),conic-gradient(from 0deg at 45% 55%, #70f080 0deg, #b0f060 40deg, #f0f040 62deg, #ff6030 82deg, #ff0040 95deg, #f00090 125deg, #8020ff 180deg, #30a0ff 230deg, #30f0d0 290deg, #70f080 360deg);clip-path:path('M16 3 Q22 3 30 12 Q44 26 53 30 Q40 40 24 48 Q8 30 16 3 Z')"></div>
 <svg class="a" style="left:0;top:0" width="60" height="60">
  <defs><linearGradient id="gam1" x1="0" y1="0" x2="1" y2="1"><stop offset="0" stop-color="#40f0a0"/><stop offset=".4" stop-color="#a0f060"/><stop offset=".6" stop-color="#ffc040"/><stop offset="1" stop-color="#ff2060"/></linearGradient>
  <linearGradient id="gam2" x1="0" y1="1" x2="1" y2="0"><stop offset="0" stop-color="#8040ff"/><stop offset=".5" stop-color="#ff80c0" stop-opacity=".5"/><stop offset="1" stop-color="#fff" stop-opacity="0"/></linearGradient></defs>
  <rect x="22" y="24" width="30" height="26" fill="url(#dots)" opacity=".5"/>
  <g transform="translate(21,41)"><path d="M10.12 -2.80 L13.79 -2.41 L13.79 2.41 L10.12 2.80 L9.14 5.18 L11.45 8.05 L8.05 11.45 L5.18 9.14 L2.80 10.12 L2.41 13.79 L-2.41 13.79 L-2.80 10.12 L-5.18 9.14 L-8.05 11.45 L-11.45 8.05 L-9.14 5.18 L-10.12 2.80 L-13.79 2.41 L-13.79 -2.41 L-10.12 -2.80 L-9.14 -5.18 L-11.45 -8.05 L-8.05 -11.45 L-5.18 -9.14 L-2.80 -10.12 L-2.41 -13.79 L2.41 -13.79 L2.80 -10.12 L5.18 -9.14 L8.05 -11.45 L11.45 -8.05 L9.14 -5.18 Z" fill="url(#gear)" stroke="#777" stroke-width=".6"/>
   <circle r="5.5" fill="#333"/><ellipse rx="3" ry="4" cx="0.5" cy="0.5" fill="#2a1a90"/></g>
 </svg>
</div>
<div class="warr" style="left:811px"></div>
<div class="wl" style="left:710px">Profile Settings</div>

<div class="wi" style="left:828px">
 <svg class="a" style="left:0;top:0" width="60" height="60">
  <path d="M10 3 H40 L50 13 V55 H10 Z" fill="#f8f8f8"/>
  <path d="M40 3 V13 H50 Z" fill="#ddd"/>
 </svg>
 <div class="a" style="left:0;top:0;width:60px;height:60px;background:radial-gradient(circle at 42% 62%,rgba(255,255,255,.75) 0,rgba(255,255,255,0) 30%),conic-gradient(from 0deg at 42% 62%, #60f070 0deg, #b0f060 40deg, #f0f040 70deg, #ff6030 92deg, #ff0040 105deg, #f00090 130deg, #8020ff 180deg, #30a0ff 230deg, #30f0d0 290deg, #60f070 360deg);clip-path:path('M17 14 Q22 13 30 21 Q38 30 46 38 Q34 46 22 53 Q10 36 17 14 Z')"></div>
</div>
<svg class="a" style="left:873px;top:792px" width="20" height="20"><circle cx="10" cy="10" r="9.2" fill="#b00" stroke="#fff" stroke-width="1.6"/><text x="10" y="14.5" text-anchor="middle" font-family="Liberation Sans" font-weight="700" font-size="13" fill="#fff">?</text></svg>
<div class="wl" style="left:798px">ICC Profile</div>

<div class="t" style="right:529px;top:757px;font-size:9px;color:#b2b7c0;text-align:right;line-height:10.5px;letter-spacing:-0.15px">2nd iteration<br>of profile<br>Verify with<br>ColorChecker Proof</div>
<svg class="a" style="left:975px;top:761px" width="11" height="11"><circle cx="5.5" cy="5.5" r="5" fill="#e8ecf2"/><path d="M2.5 5.5 H8 M5.5 3 L8 5.5 L5.5 8" stroke="#7a8496" stroke-width="1.3" fill="none"/></svg>
<svg class="a" style="left:975px;top:782px" width="11" height="11"><circle cx="5.5" cy="5.5" r="5" fill="#e8ecf2"/><path d="M2.5 5.5 H8 M5.5 3 L8 5.5 L5.5 8" stroke="#7a8496" stroke-width="1.3" fill="none"/></svg>

<!-- bottom toolbar -->
<div class="a" style="left:0;top:836px;width:1500px;height:39px;border-top:1px solid #3a3a3a;background:linear-gradient(#d0d0d0,#c4c4c4 50%,#b0b0b0)"></div>
<svg class="a" style="left:38px;top:845px" width="16" height="15"><path d="M1 1 L7 1 L5 3 L8 6 L6 8 L3 5 L1 7 Z" fill="#222"/><path d="M15 14 L9 14 L11 12 L8 9 L10 7 L13 10 L15 8 Z" fill="#222"/></svg>
<div class="t" style="left:26px;top:863px;font-size:8px;color:#151515">Full Screen</div>
<svg class="a" style="left:85px;top:846px" width="15" height="13"><rect x="1" y="1" width="2" height="2" fill="#222"/><rect x="1" y="5.5" width="2" height="2" fill="#222"/><rect x="1" y="10" width="2" height="2" fill="#222"/><rect x="5" y="1.3" width="9" height="1.2" fill="#222"/><rect x="5" y="5.8" width="9" height="1.2" fill="#222"/><rect x="5" y="10.3" width="9" height="1.2" fill="#222"/></svg>
<div class="t" style="left:80px;top:863px;font-size:8px;color:#151515">Assets</div>
<div class="t" style="left:129.5px;top:845px;font-size:16.5px;font-weight:700;color:#222">?</div>
<div class="t" style="left:126px;top:863px;font-size:8px;color:#151515">Help</div>
<svg class="a" style="left:171px;top:845px" width="15" height="14"><path d="M1.5 7 L7.5 1.5 L13.5 7" fill="none" stroke="#222" stroke-width="1.6"/><path d="M3.5 6 V13 H11.5 V6" fill="none" stroke="#222" stroke-width="1.6"/><rect x="6" y="8.5" width="3" height="4.5" fill="#222"/><rect x="10.5" y="1" width="1.6" height="4" fill="#222"/></svg>
<div class="t" style="left:167px;top:863px;font-size:8px;color:#151515">Home</div>
<svg class="a" style="left:1380px;top:845px" width="28" height="15"><g fill="#222"><rect x="2" y="3.5" width="1.8" height="1.8"/><rect x="4.6" y="3.5" width="1.8" height="1.8"/><rect x="7.2" y="3.5" width="1.8" height="1.8"/><rect x="9.8" y="3.5" width="1.8" height="1.8"/><rect x="12.4" y="3.5" width="1.8" height="1.8"/><rect x="15" y="3.5" width="1.8" height="1.8"/></g><path d="M17 4 Q19 4 19 6" fill="none" stroke="#444" stroke-width="1"/><rect x="10" y="7" width="10" height="5" fill="#555"/><path d="M15 8.5 H21 V6 L25.5 9.8 L21 13.5 V11 H15 Z" fill="#333" stroke="#eee" stroke-width=".6"/></svg>
<div class="t" style="left:1366px;top:863px;font-size:8.5px;color:#151515">Load Workflow</div>
<svg class="a" style="left:1450px;top:846px" width="26" height="14"><g fill="#222"><rect x="1.5" y="2.5" width="1.8" height="1.8"/><rect x="4.1" y="2.5" width="1.8" height="1.8"/><rect x="6.7" y="2.5" width="1.8" height="1.8"/><rect x="9.3" y="2.5" width="1.8" height="1.8"/></g><rect x="12.5" y="1.5" width="10.5" height="10.5" fill="#333"/><rect x="15" y="1.5" width="5" height="3.5" fill="#ddd"/><rect x="17.5" y="2" width="1.2" height="2.5" fill="#333"/><rect x="14" y="7" width="7.5" height="4" fill="#ddd"/><path d="M9 8 H13 V6 L16.5 9 L13 12 V10 H9 Z" fill="#222" stroke="#eee" stroke-width=".5"/></svg>
<div class="t" style="left:1434px;top:863px;font-size:8.5px;color:#151515">Save Workflow</div>
</body></html>
